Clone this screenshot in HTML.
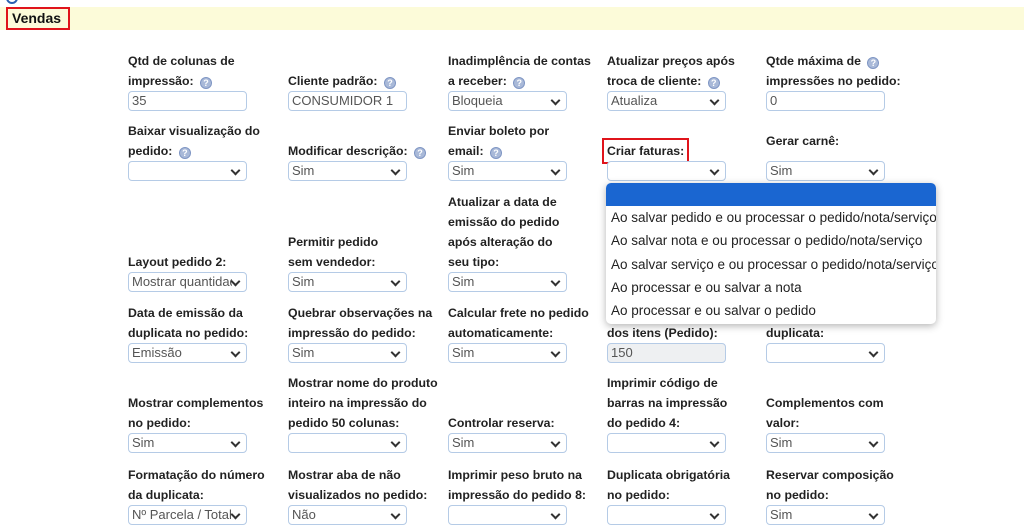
<!DOCTYPE html>
<html><head><meta charset="utf-8"><style>
*{box-sizing:border-box;margin:0;padding:0}
body{width:1024px;height:527px;overflow:hidden;background:#fff;font-family:"Liberation Sans",sans-serif;position:relative;color:#222}
.bar{position:absolute;left:0;top:7px;width:1024px;height:23px;background:#fcfbd9}
.vt{position:absolute;left:6px;top:7px;width:64px;height:23px;border:2px solid #e0141b;font-weight:bold;font-size:14px;line-height:19px;padding-left:4px;color:#111}
.circ{position:absolute;left:6px;top:-8px;width:12px;height:12px;border-radius:50%;border:2px solid #2a5fb0}
.c{position:absolute;width:160px}
.l{font-weight:bold;font-size:12.3px;line-height:20px;white-space:nowrap;color:#222}
.i,.s{width:119px;height:20px;border:1px solid #b5cbe6;border-radius:4px;font-size:13px;color:#555;line-height:18px;padding-left:3px;position:relative;background:#fff;white-space:nowrap;overflow:hidden}
.s::after{content:"";position:absolute;right:7px;top:5px;width:5px;height:5px;border-right:2px solid #333;border-bottom:2px solid #333;transform:rotate(45deg)}
.s span{display:block;width:100px;overflow:hidden}
.dis{background:#eef0f2}
.h{display:inline-block;width:12px;height:12px;border-radius:50%;background:#a9b9d8;border:1px solid #7f96c4;color:#fff;font-size:9px;line-height:10px;text-align:center;vertical-align:-1px;margin-left:3px;font-weight:bold}
.rb{outline:2px solid #e0141b;outline-offset:1px;display:inline-block;padding:0 2px}
.dd{position:absolute;left:606px;top:183px;width:330px;height:141px;background:#fff;border-radius:5px;box-shadow:0 2px 8px rgba(0,0,0,.3);font-size:13.5px;color:#222;overflow:hidden}
.dd div{height:23.3px;line-height:23px;padding-left:5px;white-space:nowrap}
.dd .sel{background:#1a66d1;height:23px;border-radius:4px 4px 0 0}
</style></head><body>
<div class="circ"></div>
<div class="bar"></div>
<div class="vt">Vendas</div>

<div class="c" style="left:128px;top:51px"><div class="l">Qtd de colunas de</div><div class="l">impressão: <span class="h">?</span></div><div class="i">35</div></div>
<div class="c" style="left:288px;top:71px"><div class="l">Cliente padrão: <span class="h">?</span></div><div class="i">CONSUMIDOR 1</div></div>
<div class="c" style="left:448px;top:51px"><div class="l">Inadimplência de contas</div><div class="l">a receber: <span class="h">?</span></div><div class="s"><span>Bloqueia</span></div></div>
<div class="c" style="left:607px;top:51px"><div class="l">Atualizar preços após</div><div class="l">troca de cliente: <span class="h">?</span></div><div class="s"><span>Atualiza</span></div></div>
<div class="c" style="left:766px;top:51px"><div class="l">Qtde máxima de <span class="h">?</span></div><div class="l">impressões no pedido:</div><div class="i">0</div></div>

<div class="c" style="left:128px;top:121px"><div class="l">Baixar visualização do</div><div class="l">pedido: <span class="h">?</span></div><div class="s"><span></span></div></div>
<div class="c" style="left:288px;top:141px"><div class="l">Modificar descrição: <span class="h">?</span></div><div class="s"><span>Sim</span></div></div>
<div class="c" style="left:448px;top:121px"><div class="l">Enviar boleto por</div><div class="l">email: <span class="h">?</span></div><div class="s"><span>Sim</span></div></div>
<div class="c" style="left:605px;top:141px"><div class="l"><span class="rb">Criar faturas:</span></div><div class="s" style="margin-left:2px"><span></span></div></div>
<div class="c" style="left:766px;top:131px"><div class="l">Gerar carnê:</div><div style="height:10px"></div><div class="s"><span>Sim</span></div></div>

<div class="c" style="left:128px;top:252px"><div class="l">Layout pedido 2:</div><div class="s"><span>Mostrar quantidade</span></div></div>
<div class="c" style="left:288px;top:232px"><div class="l">Permitir pedido</div><div class="l">sem vendedor:</div><div class="s"><span>Sim</span></div></div>
<div class="c" style="left:448px;top:192px"><div class="l">Atualizar a data de</div><div class="l">emissão do pedido</div><div class="l">após alteração do</div><div class="l">seu tipo:</div><div class="s"><span>Sim</span></div></div>

<div class="c" style="left:128px;top:303px"><div class="l">Data de emissão da</div><div class="l">duplicata no pedido:</div><div class="s"><span>Emissão</span></div></div>
<div class="c" style="left:288px;top:303px"><div class="l">Quebrar observações na</div><div class="l">impressão do pedido:</div><div class="s"><span>Sim</span></div></div>
<div class="c" style="left:448px;top:303px"><div class="l">Calcular frete no pedido</div><div class="l">automaticamente:</div><div class="s"><span>Sim</span></div></div>
<div class="c" style="left:607px;top:323px"><div class="l">dos itens (Pedido):</div><div class="i dis">150</div></div>
<div class="c" style="left:766px;top:323px"><div class="l">duplicata:</div><div class="s"><span></span></div></div>

<div class="c" style="left:128px;top:393px"><div class="l">Mostrar complementos</div><div class="l">no pedido:</div><div class="s"><span>Sim</span></div></div>
<div class="c" style="left:288px;top:373px"><div class="l">Mostrar nome do produto</div><div class="l">inteiro na impressão do</div><div class="l">pedido 50 colunas:</div><div class="s"><span></span></div></div>
<div class="c" style="left:448px;top:413px"><div class="l">Controlar reserva:</div><div class="s"><span>Sim</span></div></div>
<div class="c" style="left:607px;top:373px"><div class="l">Imprimir código de</div><div class="l">barras na impressão</div><div class="l">do pedido 4:</div><div class="s"><span></span></div></div>
<div class="c" style="left:766px;top:393px"><div class="l">Complementos com</div><div class="l">valor:</div><div class="s"><span>Sim</span></div></div>

<div class="c" style="left:128px;top:465px"><div class="l">Formatação do número</div><div class="l">da duplicata:</div><div class="s"><span>Nº Parcela / Total</span></div></div>
<div class="c" style="left:288px;top:465px"><div class="l">Mostrar aba de não</div><div class="l">visualizados no pedido:</div><div class="s"><span>Não</span></div></div>
<div class="c" style="left:448px;top:465px"><div class="l">Imprimir peso bruto na</div><div class="l">impressão do pedido 8:</div><div class="s"><span></span></div></div>
<div class="c" style="left:607px;top:465px"><div class="l">Duplicata obrigatória</div><div class="l">no pedido:</div><div class="s"><span></span></div></div>
<div class="c" style="left:766px;top:465px"><div class="l">Reservar composição</div><div class="l">no pedido:</div><div class="s"><span>Sim</span></div></div>

<div class="dd">
<div class="sel"></div>
<div>Ao salvar pedido e ou processar o pedido/nota/serviço</div>
<div>Ao salvar nota e ou processar o pedido/nota/serviço</div>
<div>Ao salvar serviço e ou processar o pedido/nota/serviço</div>
<div>Ao processar e ou salvar a nota</div>
<div>Ao processar e ou salvar o pedido</div>
</div>
</body></html>
